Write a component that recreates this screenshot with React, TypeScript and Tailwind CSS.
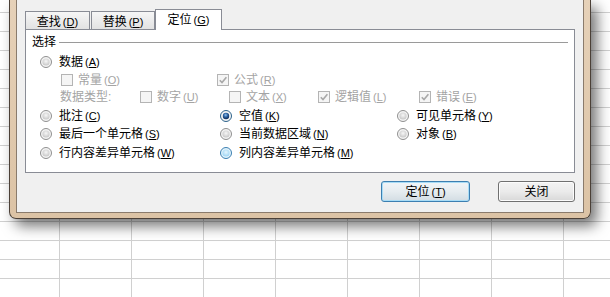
import React from 'react';

type RadioKind = 'off' | 'on' | 'hover';

function Radio({ kind = 'off' }: { kind?: RadioKind }) {
  const ring = kind === 'hover' ? '#3c7fb1' : kind === 'on' ? '#2c628b' : '#8f8f8f';
  const face = kind === 'hover' ? '#e3f4fc' : '#f4f4f4';
  return (
    <svg width="12" height="12" viewBox="0 0 12 12" className="shrink-0">
      <defs>
        <radialGradient id="rad-off" cx="50%" cy="40%" r="60%">
          <stop offset="0" stopColor="#f7f7f7" />
          <stop offset="1" stopColor="#c6c6c6" />
        </radialGradient>
        <radialGradient id="rad-on" cx="45%" cy="35%" r="65%">
          <stop offset="0" stopColor="#8fc1f0" />
          <stop offset="0.5" stopColor="#2a5f9e" />
          <stop offset="1" stopColor="#0c2a55" />
        </radialGradient>
        <radialGradient id="rad-hover" cx="50%" cy="40%" r="60%">
          <stop offset="0" stopColor="#e6f6fe" />
          <stop offset="1" stopColor="#9bd4f4" />
        </radialGradient>
      </defs>
      <circle cx="6" cy="6" r="5.5" fill={face} stroke={ring} />
      <circle cx="6" cy="6" r={kind === 'on' ? 3.2 : 3.6} fill={`url(#rad-${kind})`} />
    </svg>
  );
}

function Check({ checked = false }: { checked?: boolean }) {
  return (
    <div className="w-[12px] h-[12px] shrink-0 border border-[#b4b4b4] bg-[#f5f5f5] flex items-center justify-center">
      {checked && (
        <svg width="10" height="10" viewBox="0 0 10 10">
          <path d="M1.8 5.2 L4 7.6 L8.4 2.2" fill="none" stroke="#a8a8a8" strokeWidth="1.6" />
        </svg>
      )}
    </div>
  );
}

function Mn({ text, k, dim }: { text: string; k: string; dim?: boolean }) {
  return (
    <span className={`whitespace-nowrap ${dim ? 'text-[#a4a4a4]' : 'text-black'}`}>
      {text}
      <span className="ml-[2px] text-[11px]">(<span className="underline underline-offset-1">{k}</span>)</span>
    </span>
  );
}

function RadioItem({ kind, text, k }: { kind?: RadioKind; text: string; k: string }) {
  return (
    <div className="flex items-center">
      <Radio kind={kind} />
      <span className="ml-[7px]"><Mn text={text} k={k} /></span>
    </div>
  );
}

function CheckItem({ checked, text, k }: { checked?: boolean; text: string; k: string }) {
  return (
    <div className="flex items-center">
      <Check checked={checked} />
      <span className="ml-[5px]"><Mn text={text} k={k} dim /></span>
    </div>
  );
}

export default function App() {
  const cells = Array.from({ length: 9 * 16 });

  return (
    <div className="relative w-[610px] h-[297px] overflow-hidden bg-white text-[12px] leading-none font-['Liberation_Sans','Noto_Sans_CJK_SC',sans-serif]">
      {/* sheet grid behind the dialog */}
      <div className="grid grid-cols-[60px_repeat(8,72px)] grid-rows-[13px_repeat(15,19px)]">
        {cells.map((_, i) => (
          <div key={i} className="border-r border-b border-[#d0d0d0]" />
        ))}
      </div>

      <div className="absolute left-[9px] top-0 w-[582px] h-[219px] rounded-b-[7px] border border-t-0 border-[#4b4037] bg-linear-to-b from-[#e6d1b8] to-[#dcc3a5] px-[6px] pb-[5px] shadow-[6px_7px_14px_rgba(0,0,0,0.55)]">
        <div className="h-full border border-t-0 border-[#8a7b6c] bg-[#f0f0f0] pl-[8px] pt-[9px] flex flex-col">
          {/* tabs */}
          <div className="relative z-10 flex items-end h-[20px]">
            <div className="w-[65px] h-[18px] border border-b-0 border-[#898c95] bg-linear-to-b from-[#f6f6f6] to-[#e2e2e2] flex items-center justify-center pt-[2px]">
              <Mn text="查找" k="D" />
            </div>
            <div className="ml-[1px] w-[64px] h-[18px] border border-b-0 border-[#898c95] bg-linear-to-b from-[#f6f6f6] to-[#e2e2e2] flex items-center justify-center pt-[2px]">
              <Mn text="替换" k="P" />
            </div>
            <div className="w-[67px] h-[21px] -mb-px border border-b-0 border-[#898c95] bg-white flex items-center justify-center">
              <Mn text="定位" k="G" />
            </div>
          </div>

          {/* panel */}
          <div className="w-[550px] h-[144px] border border-[#898c95] bg-white flex flex-col">
            <div className="mt-[4px] h-[16px] px-[6px] flex items-center">
              <span>选择</span>
              <div className="ml-[3px] flex-1 h-px bg-[#9a9a9a]" />
            </div>

            <div className="mt-[3px] h-[18px] flex items-center">
              <div className="w-[194px] pl-[14px]"><RadioItem text="数据" k="A" /></div>
            </div>

            <div className="h-[17px] flex items-center">
              <div className="w-[191px] pl-[35px]"><CheckItem text="常量" k="O" /></div>
              <CheckItem checked text="公式" k="R" />
            </div>

            <div className="h-[18px] flex items-center">
              <div className="w-[114px] pl-[34px] text-[#a4a4a4] whitespace-nowrap">数据类型:</div>
              <div className="w-[89px]"><CheckItem text="数字" k="U" /></div>
              <div className="w-[89px]"><CheckItem text="文本" k="X" /></div>
              <div className="w-[101px]"><CheckItem checked text="逻辑值" k="L" /></div>
              <CheckItem checked text="错误" k="E" />
            </div>

            <div className="h-[19px] flex items-center">
              <div className="w-[194px] pl-[14px]"><RadioItem text="批注" k="C" /></div>
              <div className="w-[177px]"><RadioItem kind="on" text="空值" k="K" /></div>
              <RadioItem text="可见单元格" k="Y" />
            </div>

            <div className="h-[18px] flex items-center">
              <div className="w-[194px] pl-[14px]"><RadioItem text="最后一个单元格" k="S" /></div>
              <div className="w-[177px]"><RadioItem text="当前数据区域" k="N" /></div>
              <RadioItem text="对象" k="B" />
            </div>

            <div className="h-[19px] flex items-center">
              <div className="w-[194px] pl-[14px]"><RadioItem text="行内容差异单元格" k="W" /></div>
              <div className="w-[177px]"><RadioItem kind="hover" text="列内容差异单元格" k="M" /></div>
            </div>
          </div>

          {/* buttons */}
          <div className="mt-[8px] w-[550px] flex justify-end gap-[28px]">
            <button className="w-[89px] h-[21px] rounded-[3px] border border-[#3c7fb1] bg-linear-to-b from-[#f1f5f8] via-[#e6ecf0] to-[#d3dde3] shadow-[inset_0_0_0_1px_#a8dcf6] flex items-center justify-center">
              <Mn text="定位" k="T" />
            </button>
            <button className="w-[77px] h-[21px] rounded-[3px] border border-[#707070] bg-linear-to-b from-[#f3f3f3] via-[#ebebeb] to-[#d8d8d8] shadow-[inset_0_0_0_1px_#fcfcfc] flex items-center justify-center">
              关闭
            </button>
          </div>
        </div>
      </div>
    </div>
  );
}
